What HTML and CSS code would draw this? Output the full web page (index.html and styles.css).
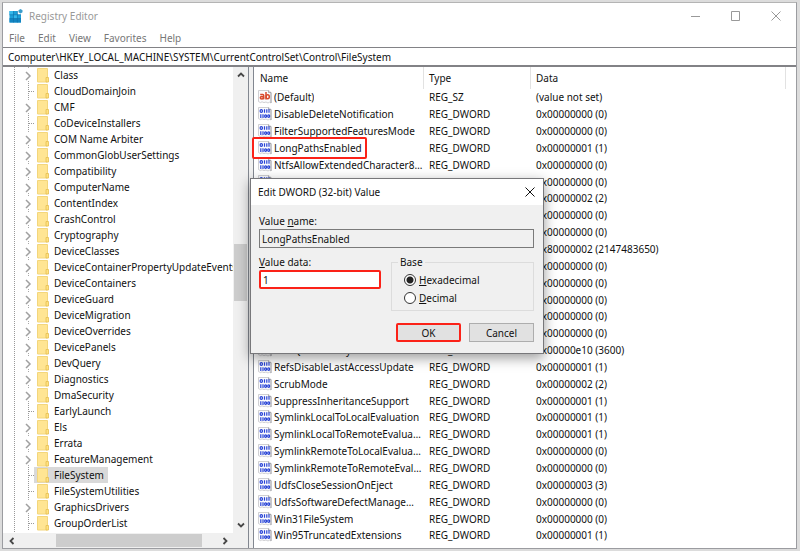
FILE: index.html
```html
<!DOCTYPE html>
<html lang="en">

<head>
  <meta charset="UTF-8">
  <meta name="viewport" content="width=device-width, initial-scale=1.0">
  <title>Registry Editor</title>
  <link rel="stylesheet" href="styles.css">
</head>

<body>
  <!-- shared icons -->
  <svg class="defs" width="0" height="0">
    <symbol id="closed" viewBox="0 0 11 16">
      <path d="M5.500 0v2M5.500 14v2" stroke="#a8a8a8" stroke-dasharray="1 1" />
      <path d="M3 5l4 4-4 4" fill="none" stroke="#a0a0a0" stroke-width="1.500" />
    </symbol>
    <symbol id="leaf" viewBox="0 0 11 16">
      <path d="M5.500 0v16M6 8.500h5" stroke="#999" stroke-dasharray="1 1" />
    </symbol>
    <symbol id="folder" viewBox="0 0 13 16">
      <path d="M.5 1.500h10V15H.5z" fill="#ffe593" stroke="#f3d67c" />
      <path d="M9 10.500h2.500v4.500H9z" fill="#ffe27f" stroke="#e6bf52" stroke-width=".8" />
    </symbol>
    <symbol id="page" viewBox="0 0 14 14">
      <path d="M.5.500h10l2.500 2v10.500l-1.500-.8-1.500.8-2-1-2 .6-2-.8-1.500.8-2-1z" fill="#fbfbfd" stroke="#c4c4c8" stroke-width=".8" />
      <path d="M10.500.500v2H13v10.500" fill="none" stroke="#9a9aa0" stroke-width=".8" />
    </symbol>
    <symbol id="dword" viewBox="0 0 14 14">
      <use href="#page" />
      <g fill="none" stroke="#2743d6" stroke-width="1.200">
        <ellipse cx="3.300" cy="4" rx="1.200" ry="1.300" />
        <path d="M6.500 2.200v3.500M8.800 2.200v3.500M11 2.200v3.500M2.800 7.300v3.600M5 7.300v3.600" />
        <ellipse cx="7.600" cy="9.100" rx="1" ry="1.300" />
        <ellipse cx="10.700" cy="9.100" rx="1" ry="1.300" />
      </g>
    </symbol>
    <symbol id="string" viewBox="0 0 14 14">
      <use href="#page" />
      <g fill="none" stroke="#d8492c" stroke-width="1.500">
        <path d="M2.200 4.600h2.500q1 0 1 1V9.300" />
        <ellipse cx="3.900" cy="7.700" rx="1.600" ry="1.200" />
        <path d="M8 2v7.500" />
        <ellipse cx="9.700" cy="6.800" rx="1.600" ry="2" />
      </g>
    </symbol>
    <symbol id="chevron" viewBox="0 0 8 8">
      <path d="M1 5.500l3-3 3 3" fill="none" stroke="#484848" stroke-width="1.800" />
    </symbol>
    <symbol id="cross" viewBox="0 0 10 10">
      <path d="M.5.500l9 9M9.500.500l-9 9" fill="none" stroke="currentColor" />
    </symbol>
  </svg>

  <div class="window">
    <header class="titlebar">
      <svg class="logo" width="14" height="14" viewBox="0 0 14 14">
        <path d="M.5 2h8v3.500h3.500V13.500H.5z" fill="#1c9fd8" />
        <path d="M.5 2h4v3.800h-4zM4.500 5.800h3.800v3.800H4.500z" fill="#35b8ea" />
        <path d="M.5 9.600H12v3.900H.5z" fill="#1285c2" />
        <path d="M4.500 2v11.500M8.400 2v11.500M.5 5.800H12M.5 9.600H12" stroke="#0d6fa8" stroke-width=".6" />
        <path d="M11.500 0l2 1.200v2l-2 1.200-2-1.200v-2z" fill="#3a9dcc" />
      </svg>
      <h1 class="title">Registry Editor</h1>
      <div class="controls">
        <button class="control" aria-label="Minimize"><svg width="10" height="10"><path d="M0 5.500h9" stroke="currentColor" /></svg></button>
        <button class="control" aria-label="Maximize"><svg width="10" height="10"><path d="M.5.500h8v9h-8z" fill="none" stroke="currentColor" /></svg></button>
        <button class="control" aria-label="Close"><svg width="10" height="10"><use href="#cross" /></svg></button>
      </div>
    </header>
    <nav class="menu">
      <button>File</button>
      <button>Edit</button>
      <button>View</button>
      <button>Favorites</button>
      <button>Help</button>
    </nav>
    <input class="address" type="text" aria-label="Address" value="Computer\HKEY_LOCAL_MACHINE\SYSTEM\CurrentControlSet\Control\FileSystem">

    <main class="panes">
      <section class="tree-pane">
        <div class="tree-view">
          <ul class="tree">
            <li><svg class="branch"><use href="#closed" /></svg><span class="key"><svg class="folder"><use href="#folder" /></svg>Class</span></li>
            <li><svg class="branch"><use href="#leaf" /></svg><span class="key"><svg class="folder"><use href="#folder" /></svg>CloudDomainJoin</span></li>
            <li><svg class="branch"><use href="#closed" /></svg><span class="key"><svg class="folder"><use href="#folder" /></svg>CMF</span></li>
            <li><svg class="branch"><use href="#leaf" /></svg><span class="key"><svg class="folder"><use href="#folder" /></svg>CoDeviceInstallers</span></li>
            <li><svg class="branch"><use href="#closed" /></svg><span class="key"><svg class="folder"><use href="#folder" /></svg>COM Name Arbiter</span></li>
            <li><svg class="branch"><use href="#closed" /></svg><span class="key"><svg class="folder"><use href="#folder" /></svg>CommonGlobUserSettings</span></li>
            <li><svg class="branch"><use href="#closed" /></svg><span class="key"><svg class="folder"><use href="#folder" /></svg>Compatibility</span></li>
            <li><svg class="branch"><use href="#closed" /></svg><span class="key"><svg class="folder"><use href="#folder" /></svg>ComputerName</span></li>
            <li><svg class="branch"><use href="#closed" /></svg><span class="key"><svg class="folder"><use href="#folder" /></svg>ContentIndex</span></li>
            <li><svg class="branch"><use href="#closed" /></svg><span class="key"><svg class="folder"><use href="#folder" /></svg>CrashControl</span></li>
            <li><svg class="branch"><use href="#closed" /></svg><span class="key"><svg class="folder"><use href="#folder" /></svg>Cryptography</span></li>
            <li><svg class="branch"><use href="#closed" /></svg><span class="key"><svg class="folder"><use href="#folder" /></svg>DeviceClasses</span></li>
            <li><svg class="branch"><use href="#closed" /></svg><span class="key"><svg class="folder"><use href="#folder" /></svg>DeviceContainerPropertyUpdateEvents</span></li>
            <li><svg class="branch"><use href="#closed" /></svg><span class="key"><svg class="folder"><use href="#folder" /></svg>DeviceContainers</span></li>
            <li><svg class="branch"><use href="#closed" /></svg><span class="key"><svg class="folder"><use href="#folder" /></svg>DeviceGuard</span></li>
            <li><svg class="branch"><use href="#closed" /></svg><span class="key"><svg class="folder"><use href="#folder" /></svg>DeviceMigration</span></li>
            <li><svg class="branch"><use href="#closed" /></svg><span class="key"><svg class="folder"><use href="#folder" /></svg>DeviceOverrides</span></li>
            <li><svg class="branch"><use href="#closed" /></svg><span class="key"><svg class="folder"><use href="#folder" /></svg>DevicePanels</span></li>
            <li><svg class="branch"><use href="#closed" /></svg><span class="key"><svg class="folder"><use href="#folder" /></svg>DevQuery</span></li>
            <li><svg class="branch"><use href="#closed" /></svg><span class="key"><svg class="folder"><use href="#folder" /></svg>Diagnostics</span></li>
            <li><svg class="branch"><use href="#closed" /></svg><span class="key"><svg class="folder"><use href="#folder" /></svg>DmaSecurity</span></li>
            <li><svg class="branch"><use href="#leaf" /></svg><span class="key"><svg class="folder"><use href="#folder" /></svg>EarlyLaunch</span></li>
            <li><svg class="branch"><use href="#closed" /></svg><span class="key"><svg class="folder"><use href="#folder" /></svg>Els</span></li>
            <li><svg class="branch"><use href="#closed" /></svg><span class="key"><svg class="folder"><use href="#folder" /></svg>Errata</span></li>
            <li><svg class="branch"><use href="#closed" /></svg><span class="key"><svg class="folder"><use href="#folder" /></svg>FeatureManagement</span></li>
            <li><svg class="branch"><use href="#leaf" /></svg><span class="key selected"><svg class="folder"><use href="#folder" /></svg>FileSystem</span></li>
            <li><svg class="branch"><use href="#leaf" /></svg><span class="key"><svg class="folder"><use href="#folder" /></svg>FileSystemUtilities</span></li>
            <li><svg class="branch"><use href="#closed" /></svg><span class="key"><svg class="folder"><use href="#folder" /></svg>GraphicsDrivers</span></li>
            <li><svg class="branch"><use href="#leaf" /></svg><span class="key"><svg class="folder"><use href="#folder" /></svg>GroupOrderList</span></li>
          </ul>
          <div class="scroll-y">
            <svg class="arrow"><use href="#chevron" /></svg>
            <div class="track"><div class="thumb"></div></div>
            <svg class="arrow down"><use href="#chevron" /></svg>
          </div>
        </div>
        <div class="scroll-x">
          <svg class="arrow left"><use href="#chevron" /></svg>
          <div class="track"><div class="thumb"></div></div>
          <svg class="arrow right"><use href="#chevron" /></svg>
        </div>
      </section>

      <section class="list-pane">
        <table class="values">
          <thead>
            <tr><th class="col-name">Name</th><th class="col-type">Type</th><th>Data</th></tr>
          </thead>
          <tbody>
            <tr><td><div class="entry"><svg><use href="#string" /></svg><span>(Default)</span></div></td><td>REG_SZ</td><td>(value not set)</td></tr>
            <tr><td><div class="entry"><svg><use href="#dword" /></svg><span>DisableDeleteNotification</span></div></td><td>REG_DWORD</td><td>0x00000000 (0)</td></tr>
            <tr><td><div class="entry"><svg><use href="#dword" /></svg><span>FilterSupportedFeaturesMode</span></div></td><td>REG_DWORD</td><td>0x00000000 (0)</td></tr>
            <tr><td><div class="entry marked"><svg><use href="#dword" /></svg><span>LongPathsEnabled</span></div></td><td>REG_DWORD</td><td>0x00000001 (1)</td></tr>
            <tr><td><div class="entry"><svg><use href="#dword" /></svg><span>NtfsAllowExtendedCharacter8dot3Rename</span></div></td><td>REG_DWORD</td><td>0x00000000 (0)</td></tr>
            <tr><td><div class="entry"><svg><use href="#dword" /></svg><span>NtfsBugcheckOnCorrupt</span></div></td><td>REG_DWORD</td><td>0x00000000 (0)</td></tr>
            <tr><td><div class="entry"><svg><use href="#dword" /></svg><span>NtfsDisable8dot3NameCreation</span></div></td><td>REG_DWORD</td><td>0x00000002 (2)</td></tr>
            <tr><td><div class="entry"><svg><use href="#dword" /></svg><span>NtfsDisableCompression</span></div></td><td>REG_DWORD</td><td>0x00000000 (0)</td></tr>
            <tr><td><div class="entry"><svg><use href="#dword" /></svg><span>NtfsDisableEncryption</span></div></td><td>REG_DWORD</td><td>0x00000000 (0)</td></tr>
            <tr><td><div class="entry"><svg><use href="#dword" /></svg><span>NtfsDisableLastAccessUpdate</span></div></td><td>REG_DWORD</td><td>0x80000002 (2147483650)</td></tr>
            <tr><td><div class="entry"><svg><use href="#dword" /></svg><span>NtfsDisableLfsDowngrade</span></div></td><td>REG_DWORD</td><td>0x00000000 (0)</td></tr>
            <tr><td><div class="entry"><svg><use href="#dword" /></svg><span>NtfsDisableVolsnapHints</span></div></td><td>REG_DWORD</td><td>0x00000000 (0)</td></tr>
            <tr><td><div class="entry"><svg><use href="#dword" /></svg><span>NtfsEncryptPagingFile</span></div></td><td>REG_DWORD</td><td>0x00000000 (0)</td></tr>
            <tr><td><div class="entry"><svg><use href="#dword" /></svg><span>NtfsMemoryUsage</span></div></td><td>REG_DWORD</td><td>0x00000000 (0)</td></tr>
            <tr><td><div class="entry"><svg><use href="#dword" /></svg><span>NtfsMftZoneReservation</span></div></td><td>REG_DWORD</td><td>0x00000000 (0)</td></tr>
            <tr><td><div class="entry"><svg><use href="#dword" /></svg><span>NtfsQuotaNotifyRate</span></div></td><td>REG_DWORD</td><td>0x00000e10 (3600)</td></tr>
            <tr><td><div class="entry"><svg><use href="#dword" /></svg><span>RefsDisableLastAccessUpdate</span></div></td><td>REG_DWORD</td><td>0x00000001 (1)</td></tr>
            <tr><td><div class="entry"><svg><use href="#dword" /></svg><span>ScrubMode</span></div></td><td>REG_DWORD</td><td>0x00000002 (2)</td></tr>
            <tr><td><div class="entry"><svg><use href="#dword" /></svg><span>SuppressInheritanceSupport</span></div></td><td>REG_DWORD</td><td>0x00000001 (1)</td></tr>
            <tr><td><div class="entry"><svg><use href="#dword" /></svg><span>SymlinkLocalToLocalEvaluation</span></div></td><td>REG_DWORD</td><td>0x00000001 (1)</td></tr>
            <tr><td><div class="entry"><svg><use href="#dword" /></svg><span>SymlinkLocalToRemoteEvaluation</span></div></td><td>REG_DWORD</td><td>0x00000001 (1)</td></tr>
            <tr><td><div class="entry"><svg><use href="#dword" /></svg><span>SymlinkRemoteToLocalEvaluation</span></div></td><td>REG_DWORD</td><td>0x00000000 (0)</td></tr>
            <tr><td><div class="entry"><svg><use href="#dword" /></svg><span>SymlinkRemoteToRemoteEvaluation</span></div></td><td>REG_DWORD</td><td>0x00000000 (0)</td></tr>
            <tr><td><div class="entry"><svg><use href="#dword" /></svg><span>UdfsCloseSessionOnEject</span></div></td><td>REG_DWORD</td><td>0x00000003 (3)</td></tr>
            <tr><td><div class="entry"><svg><use href="#dword" /></svg><span>UdfsSoftwareDefectManagement</span></div></td><td>REG_DWORD</td><td>0x00000000 (0)</td></tr>
            <tr><td><div class="entry"><svg><use href="#dword" /></svg><span>Win31FileSystem</span></div></td><td>REG_DWORD</td><td>0x00000000 (0)</td></tr>
            <tr><td><div class="entry"><svg><use href="#dword" /></svg><span>Win95TruncatedExtensions</span></div></td><td>REG_DWORD</td><td>0x00000001 (1)</td></tr>
          </tbody>
        </table>
      </section>
    </main>
  </div>

  <form class="dialog" role="dialog" aria-labelledby="dialog-title">
    <div class="dialog-bar">
      <h2 class="dialog-title" id="dialog-title">Edit DWORD (32-bit) Value</h2>
      <button class="dialog-close" type="button" aria-label="Close"><svg width="10" height="10"><use href="#cross" /></svg></button>
    </div>
    <div class="dialog-body">
      <label for="value-name">Value <u>n</u>ame:</label>
      <input class="field readonly" id="value-name" type="text" value="LongPathsEnabled" readonly>
      <div class="columns">
        <div class="data">
          <label for="value-data"><u>V</u>alue data:</label>
          <input class="field highlight" id="value-data" type="text" value="1">
        </div>
        <fieldset class="base">
          <legend>Base</legend>
          <label><input type="radio" name="base" checked><span><u>H</u>exadecimal</span></label>
          <label><input type="radio" name="base"><span><u>D</u>ecimal</span></label>
        </fieldset>
      </div>
      <div class="actions">
        <button class="btn highlight" type="button">OK</button>
        <button class="btn" type="button">Cancel</button>
      </div>
    </div>
  </form>
</body>

</html>
```
FILE: styles.css
```css
* {
  box-sizing: border-box;
}

body {
  margin: 0;
  padding: 2px 3px 2px 2px;
  height: 100vh;
  background: #dcdcdc;
  color: #111;
  font: 10px/16px "Noto Sans", "Open Sans", sans-serif;
}

button,
input {
  font: inherit;
  color: inherit;
  border-radius: 0;
}

svg {
  display: block;
  flex: none;
}

.defs {
  position: absolute;
}

.window {
  display: flex;
  flex-direction: column;
  height: 100%;
  background: #fff;
  border: 1px solid #9b9ca0;
  border-top-color: #b4b4b4;
}

/* title and menu */

.titlebar {
  display: flex;
  align-items: center;
  height: 26px;
  padding-left: 6px;
  color: #999;
}

.title {
  flex: 1;
  margin: 0 0 0 6px;
  font-size: 10px;
  font-weight: normal;
}

.controls {
  display: flex;
}

.control {
  display: flex;
  align-items: center;
  justify-content: center;
  width: 40px;
  height: 24px;
  padding: 0;
  border: 0;
  background: none;
}

.menu {
  display: flex;
  gap: 13px;
  height: 18px;
  padding-left: 6px;
}

.menu button {
  padding: 0;
  border: 0;
  background: none;
  color: #777;
}

.address {
  width: 100%;
  height: 20px;
  padding: 0 5px;
  border: 1px solid #828286;
  border-width: 1px 0 2px;
  background: #fff;
  outline: none;
}

/* panes */

.panes {
  display: flex;
  flex: 1;
  gap: 4px;
  min-height: 0;
  background: #f0f0f0;
}

.tree-pane {
  display: flex;
  flex-direction: column;
  width: 246px;
  border-right: 1px solid #828790;
  background: #fff;
}

.tree-view {
  display: flex;
  flex: 1;
  min-height: 0;
}

.tree {
  flex: 1;
  margin: 0;
  padding: 0 0 0 20px;
  overflow: hidden;
  list-style: none;
  background: repeating-linear-gradient(#999 0 1px, #fff 1px 2px) 11px 0 / 1px 100% no-repeat;
}

.tree li {
  display: flex;
  height: 16px;
  white-space: nowrap;
}

.branch {
  width: 11px;
  height: 16px;
}

.key {
  display: flex;
  gap: 4px;
  padding: 0 4px 0 3px;
}

.selected {
  background: #d9d9d9;
}

.folder {
  width: 13px;
  height: 16px;
}

.scroll-y,
.scroll-x {
  display: flex;
  align-items: center;
  justify-content: space-between;
  background: #f0f0f0;
}

.scroll-y {
  flex-direction: column;
  width: 15px;
  padding: 4px 0;
}

.scroll-x {
  height: 15px;
  padding: 0 19px 0 5px;
}

.arrow {
  width: 8px;
  height: 8px;
}

.down {
  transform: rotate(180deg);
}

.left {
  transform: rotate(-90deg);
}

.right {
  transform: rotate(90deg);
}

.track {
  display: flex;
  flex: 1;
}

.thumb {
  background: #cdcdcd;
}

.scroll-y .track {
  flex-direction: column;
  width: 13px;
  padding-top: 165px;
}

.scroll-y .thumb {
  height: 57px;
}

.scroll-x .track {
  height: 13px;
  padding-left: 40px;
}

.scroll-x .thumb {
  width: 146px;
}

/* value list */

.list-pane {
  flex: 1;
  min-width: 0;
  padding: 0 10px 4px 0;
  border-left: 1px solid #828790;
  background: #fff;
}

.values {
  width: 100%;
  height: 100%;
  table-layout: fixed;
  border-collapse: separate;
  border-spacing: 0;
  line-height: 16px;
}

.values th {
  height: 22px;
  padding: 0 5px;
  border-right: 1px solid #e2e2e2;
  font-weight: normal;
  text-align: left;
}

.values td {
  padding: 0 5px;
  white-space: nowrap;
}

.values td:first-child {
  padding: 0 1px 0 4px;
}

.values .col-name {
  width: 170px;
  padding-left: 6px;
}

.values .col-type {
  width: 107px;
}

.entry {
  display: flex;
  align-items: center;
  gap: 2px;
}

.entry svg {
  width: 14px;
  height: 14px;
}

.entry span {
  overflow: hidden;
  text-overflow: ellipsis;
}

.marked {
  position: relative;
  width: max-content;
}

.marked::after {
  content: "";
  position: absolute;
  inset: -3px -5px -3px -6px;
  border: 2px solid #fb2218;
  border-radius: 2px;
}

/* edit dialog */

.dialog {
  position: absolute;
  top: 178px;
  left: 250px;
  width: 294px;
  border: 1px solid #77777a;
  background: #f0f0f0;
  box-shadow: 0 4px 12px rgba(0, 0, 0, 0.4);
}

.dialog-bar {
  display: flex;
  align-items: center;
  justify-content: space-between;
  height: 26px;
  padding: 0 8px 0 7px;
  background: #fff;
}

.dialog-title {
  margin: 0;
  font-size: 10px;
  font-weight: normal;
}

.dialog-close {
  padding: 0;
  border: 0;
  background: none;
}

.dialog-body {
  padding: 8px 9px 11px 8px;
}

.dialog-body label {
  display: block;
}

.field {
  display: block;
  width: 100%;
  height: 19px;
  padding: 0 2px;
  border: 1px solid #7a7a7a;
  outline: none;
  background: #fff;
}

.readonly {
  background: #f0f0f0;
}

.columns {
  display: flex;
  gap: 10px;
  margin-top: 6px;
}

.data {
  flex: 1;
}

.base {
  width: 143px;
  height: 57px;
  margin: 0;
  padding: 1px 12px 0;
  border: 1px solid #dcdcdc;
}

.base legend {
  margin-left: -6px;
  padding: 0 2px;
}

.base label {
  display: flex;
  align-items: center;
  gap: 3px;
  height: 18px;
}

.base input {
  appearance: none;
  width: 12px;
  height: 12px;
  margin: 0;
  border: 1px solid #333;
  border-radius: 50%;
  background: #fff;
}

.base input:checked {
  background: radial-gradient(#222 3px, #fff 4px);
}

.actions {
  display: flex;
  justify-content: flex-end;
  gap: 8px;
  margin-top: 12px;
}

.btn {
  width: 65px;
  height: 19px;
  padding: 0;
  border: 1px solid #adadad;
  background: #e1e1e1;
  line-height: 16px;
}

.highlight {
  border: 2px solid #fb2218;
  border-radius: 2px;
}
```
